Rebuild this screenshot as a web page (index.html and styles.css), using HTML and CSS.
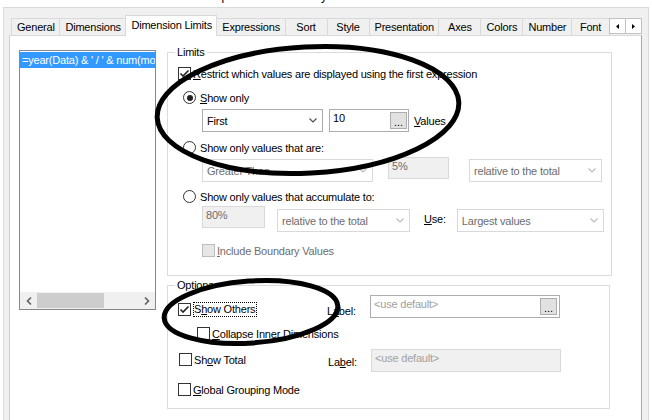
FILE: index.html
```html
<!DOCTYPE html>
<html lang="en">
<head>
    <meta charset="UTF-8">
    <title>Chart Properties - Dimension Limits</title>
    <link rel="stylesheet" href="styles.css">
</head>
<body>
    <div class="caption"><span>Chart Properties - CH Monthly</span></div>

    <div class="dialog">
        <div class="tabs">
            <div class="tab">General</div>
            <div class="tab">Dimensions</div>
            <div class="tab active">Dimension Limits</div>
            <div class="tab">Expressions</div>
            <div class="tab">Sort</div>
            <div class="tab">Style</div>
            <div class="tab">Presentation</div>
            <div class="tab">Axes</div>
            <div class="tab">Colors</div>
            <div class="tab">Number</div>
            <div class="tab tab-last">Font</div>
            <div class="tab-scroll">
                <span class="scroll-btn"><svg width="3" height="5" viewBox="0 0 3 5"><path d="M3 0 L0 2.5 L3 5 Z"/></svg></span>
                <span class="scroll-btn"><svg width="3" height="5" viewBox="0 0 3 5"><path d="M0 0 L3 2.5 L0 5 Z"/></svg></span>
            </div>
        </div>

        <div class="panel">
            <div class="listbox">
                <div class="list-items">
                    <div class="list-item selected">=year(Data) &amp; ' / ' &amp; num(month(Data), '00')</div>
                </div>
                <div class="hscroll">
                    <span class="hs-arrow"><svg width="6" height="8" viewBox="0 0 6 8"><path d="M5 0.5 L1.5 4 L5 7.5"/></svg></span>
                    <span class="hs-thumb"></span>
                    <span class="hs-track"></span>
                    <span class="hs-arrow"><svg width="6" height="8" viewBox="0 0 6 8"><path d="M1 0.5 L4.5 4 L1 7.5"/></svg></span>
                </div>
            </div>

            <div class="settings">
                <fieldset class="group limits">
                    <legend>Limits</legend>

                    <div class="row row-restrict">
                        <span class="check checked"><svg width="11" height="11" viewBox="0 0 11 11"><path d="M1.5 5.5 L4 8 L9.5 2.5"/></svg></span>
                        <span><u>R</u>estrict which values are displayed using the first expression</span>
                    </div>

                    <div class="row row-radio">
                        <span class="radio on"></span>
                        <span><u>S</u>how only</span>
                    </div>

                    <div class="row row-controls">
                        <div class="combo w-first"><span>First</span><svg class="chev" width="8" height="5" viewBox="0 0 8 5"><path d="M0.5 0.5 L4 4 L7.5 0.5"/></svg></div>
                        <div class="edit w-count"><span>10</span><span class="dots">...</span></div>
                        <span class="after-edit"><u>V</u>alues</span>
                    </div>

                    <div class="row row-radio2">
                        <span class="radio"></span>
                        <span>Show only values that are:</span>
                    </div>

                    <div class="row row-compare">
                        <div class="combo disabled w-compare"><span>Greater Than</span><svg class="chev" width="8" height="5" viewBox="0 0 8 5"><path d="M0.5 0.5 L4 4 L7.5 0.5"/></svg></div>
                        <div class="edit disabled w-percent"><span>5%</span></div>
                        <div class="combo disabled w-relative first-relative"><span>relative to the total</span><svg class="chev" width="8" height="5" viewBox="0 0 8 5"><path d="M0.5 0.5 L4 4 L7.5 0.5"/></svg></div>
                    </div>

                    <div class="row row-radio3">
                        <span class="radio"></span>
                        <span>Show only values that accumulate to:</span>
                    </div>

                    <div class="row row-accumulate">
                        <div class="edit disabled w-accum"><span>80%</span></div>
                        <div class="combo disabled w-relative second-relative"><span>relative to the total</span><svg class="chev" width="8" height="5" viewBox="0 0 8 5"><path d="M0.5 0.5 L4 4 L7.5 0.5"/></svg></div>
                        <span class="use-label"><u>U</u>se:</span>
                        <div class="combo disabled w-largest"><span>Largest values</span><svg class="chev" width="8" height="5" viewBox="0 0 8 5"><path d="M0.5 0.5 L4 4 L7.5 0.5"/></svg></div>
                    </div>

                    <div class="row row-boundary">
                        <span class="check disabled"></span>
                        <span class="muted"><u>I</u>nclude Boundary Values</span>
                    </div>
                </fieldset>

                <fieldset class="group options">
                    <legend>Options</legend>

                    <div class="row row-others">
                        <div class="check-cell">
                            <span class="check checked"><svg width="11" height="11" viewBox="0 0 11 11"><path d="M1.5 5.5 L4 8 L9.5 2.5"/></svg></span>
                            <span class="focus">S<u>h</u>ow Others</span>
                        </div>
                        <span class="field-label">L<u>a</u>bel:</span>
                        <div class="edit w-label"><span class="placeholder">&lt;use default&gt;</span><span class="dots">...</span></div>
                    </div>

                    <div class="row row-collapse">
                        <span class="check"></span>
                        <span><u>C</u>ollapse Inner Dimensions</span>
                    </div>

                    <div class="row row-total">
                        <div class="check-cell">
                            <span class="check"></span>
                            <span>Sh<u>o</u>w Total</span>
                        </div>
                        <span class="field-label">La<u>b</u>el:</span>
                        <div class="edit disabled w-label"><span class="placeholder">&lt;use default&gt;</span></div>
                    </div>

                    <div class="row row-grouping">
                        <span class="check"></span>
                        <span><u>G</u>lobal Grouping Mode</span>
                    </div>
                </fieldset>
            </div>
        </div>
    </div>

    <!-- hand drawn marks on top of the screenshot -->
    <svg class="marks" width="652" height="420" viewBox="0 0 652 420">
        <ellipse cx="308" cy="110" rx="151" ry="63" transform="rotate(-3 308 110)"/>
        <ellipse cx="251" cy="312" rx="87" ry="31" transform="rotate(-4 251 312)"/>
    </svg>
</body>
</html>
```

FILE: styles.css
```css
body {
    margin: 0;
    height: 420px;
    overflow: hidden;
    position: relative;
    background: #fff;
    font-family: "Liberation Sans", Arial, sans-serif;
    font-size: 11px;
    letter-spacing: -0.2px;
    color: #000;
}

u {
    text-decoration: underline;
}

.caption {
    height: 7px;
    overflow: hidden;
    padding-left: 172px;
    font-size: 12px;
    line-height: 12px;
}

.caption span {
    display: block;
    margin-top: -10px;
    white-space: nowrap;
}

.dialog {
    margin-left: 3px;
    width: 646px;
    height: 420px;
    box-sizing: border-box;
    padding: 7px 0 0 5px;
    background: #f0f0f0;
    border: 1px solid #dadada;
    border-bottom: none;
}

/* tab strip */

.tabs {
    display: flex;
    align-items: flex-end;
    width: 633px;
    height: 20px;
    box-sizing: border-box;
    padding-left: 2px;
    overflow: visible;
}

.tab {
    height: 17px;
    min-width: 43px;
    box-sizing: border-box;
    padding: 0 5px;
    margin-right: -1px;
    border: 1px solid #d9d9d9;
    border-bottom: none;
    background: #f0f0f0;
    text-align: center;
    line-height: 16px;
    white-space: nowrap;
}

.tab.active {
    height: 21px;
    margin-bottom: -1px;
    position: relative;
    z-index: 1;
    background: #fff;
    line-height: 19px;
}

.tab-last {
    min-width: 39px;
}

.tab-scroll {
    display: flex;
    align-self: flex-start;
    margin: 3px 0 0 auto;
    border: 1px solid #c2c2c2;
    background: #fdfdfd;
}

.scroll-btn {
    display: flex;
    align-items: center;
    justify-content: center;
    width: 15px;
    height: 14px;
}

.scroll-btn + .scroll-btn {
    border-left: 1px solid #c2c2c2;
}

.scroll-btn path {
    fill: #000;
}

/* page */

.panel {
    display: flex;
    align-items: flex-start;
    width: 633px;
    height: 400px;
    box-sizing: border-box;
    padding: 10px 0 0 9px;
    background: #fff;
    border: 1px solid #d9d9d9;
    border-right-color: #a8a8a8;
    border-left-color: #cfcfcf;
}

.listbox {
    display: flex;
    flex-direction: column;
    width: 137px;
    height: 260px;
    margin-top: 4px;
    box-sizing: border-box;
    border: 1px solid #828790;
}

.list-items {
    flex: 1;
    padding: 1px 0 0;
    overflow: hidden;
}

.list-item {
    height: 16px;
    line-height: 16px;
    padding-left: 2px;
    white-space: nowrap;
    overflow: hidden;
}

.list-item.selected {
    background: #3399ff;
    color: #fff;
}

.hscroll {
    display: flex;
    align-items: center;
    height: 17px;
    background: #f0f0f0;
}

.hs-arrow {
    display: flex;
    align-items: center;
    justify-content: center;
    width: 17px;
    height: 17px;
}

.hs-arrow path {
    fill: none;
    stroke: #606060;
    stroke-width: 1.6;
}

.hs-thumb {
    width: 67px;
    height: 15px;
    background: #cdcdcd;
}

.hs-track {
    flex: 1;
}

.settings {
    display: flex;
    flex-direction: column;
    margin-left: 11px;
}

/* group boxes */

.group {
    margin: 0;
    padding: 0;
    min-width: 0;
    border: 1px solid #dcdcdc;
}

.group legend {
    margin-left: 7px;
    padding: 0 2px;
    line-height: 13px;
}

.limits {
    width: 445px;
    height: 230px;
    box-sizing: border-box;
}

.options {
    width: 443px;
    height: 130px;
    margin-top: 3px;
    box-sizing: border-box;
}

.row {
    display: flex;
    align-items: center;
    white-space: nowrap;
}

.row-restrict {
    height: 13px;
    margin-top: 8px;
    padding-left: 10px;
}

.row-radio {
    height: 13px;
    margin-top: 11px;
    padding-left: 15px;
}

.row-controls {
    height: 23px;
    margin-top: 5px;
    padding-left: 34px;
}

.row-radio2 {
    height: 13px;
    margin-top: 9px;
    padding-left: 15px;
}

.row-compare {
    align-items: flex-start;
    height: 25px;
    margin-top: 3px;
    padding-left: 34px;
}

.row-radio3 {
    height: 13px;
    margin-top: 8px;
    padding-left: 15px;
}

.row-accumulate {
    align-items: flex-start;
    height: 26px;
    margin-top: 3px;
    padding-left: 34px;
}

.row-boundary {
    height: 13px;
    margin-top: 12px;
    padding-left: 34px;
}

.row-others {
    align-items: flex-start;
    height: 23px;
    margin-top: 3px;
}

.row-collapse {
    height: 13px;
    margin-top: 9px;
    padding-left: 29px;
}

.row-total {
    align-items: flex-start;
    height: 23px;
    margin-top: 9px;
}

.row-grouping {
    height: 13px;
    margin-top: 11px;
    padding-left: 10px;
}

.check-cell {
    display: flex;
    align-items: center;
    width: 149px;
    height: 15px;
}

.row-others .check-cell {
    margin: 7px 0 0 10px;
}

.row-total .check-cell {
    margin: 3px 0 0 11px;
}

.field-label {
    width: 43px;
    line-height: 13px;
}

.row-others .field-label {
    margin-top: 10px;
}

.row-total .field-label {
    margin-top: 7px;
}

/* checkboxes and radios */

.check {
    display: flex;
    align-items: center;
    justify-content: center;
    flex: none;
    width: 13px;
    height: 13px;
    box-sizing: border-box;
    margin-right: 2px;
    border: 1px solid #333;
    background: #fff;
}

.check path {
    fill: none;
    stroke: #222;
    stroke-width: 1.6;
}

.check.disabled {
    border-color: #bcbcbc;
    background: #e6e6e6;
}

.radio {
    position: relative;
    flex: none;
    width: 13px;
    height: 13px;
    box-sizing: border-box;
    margin-right: 4px;
    border: 1px solid #333;
    border-radius: 50%;
    background: #fff;
}

.radio.on::after {
    content: "";
    position: absolute;
    left: 2.5px;
    top: 2.5px;
    width: 6px;
    height: 6px;
    border-radius: 50%;
    background: #222;
}

.focus {
    border: 1px dotted #000;
    line-height: 13px;
    padding-right: 1px;
}

.muted {
    color: #6d6d6d;
}

/* combos and edits */

.combo {
    display: flex;
    align-items: center;
    justify-content: space-between;
    flex: none;
    height: 23px;
    box-sizing: border-box;
    padding: 0 5px 0 4px;
    border: 1px solid #acacac;
    background: #fff;
}

.chev path {
    fill: none;
    stroke: #505050;
    stroke-width: 1.2;
}

.combo.disabled {
    border-color: #d9d9d9;
    color: #6d6d6d;
}

.combo.disabled .chev path {
    stroke: #bcbcbc;
}

.edit {
    display: flex;
    justify-content: space-between;
    align-items: flex-start;
    flex: none;
    height: 23px;
    box-sizing: border-box;
    padding: 2px 1px 0 3px;
    border: 1px solid #abadb3;
    background: #fff;
    line-height: 13px;
}

.edit.disabled {
    height: 22px;
    border-color: #d9d9d9;
    background: #f0f0f0;
    color: #6d6d6d;
}

.row-total .edit.disabled {
    height: 23px;
}

.dots {
    align-self: center;
    width: 17px;
    height: 17px;
    margin-top: -2px;
    box-sizing: border-box;
    border: 1px solid #adadad;
    background: #e1e1e1;
    line-height: 19px;
    text-align: center;
    letter-spacing: 0;
}

.placeholder {
    color: #a0a0a0;
}

.w-first { width: 121px; }
.w-count { width: 80px; margin-left: 6px; }
.w-compare { width: 171px; margin-top: 2px; }
.w-percent { width: 61px; margin-left: 15px; }
.w-relative { width: 133px; }
.first-relative { margin: 2px 0 0 20px; }
.w-accum { width: 63px; }
.second-relative { margin: 3px 0 0 12px; }
.w-largest { width: 147px; margin: 3px 0 0 11px; }
.w-label { width: 190px; }

.row-others .w-label .dots {
    margin-right: 1px;
}

.after-edit {
    margin-left: 5px;
}

.use-label {
    margin: 7px 0 0 14px;
    line-height: 13px;
}

/* ink marks */

.marks {
    position: absolute;
    left: 0;
    top: 0;
    pointer-events: none;
}

.marks ellipse {
    fill: none;
    stroke: #000;
    stroke-width: 5;
}
```
